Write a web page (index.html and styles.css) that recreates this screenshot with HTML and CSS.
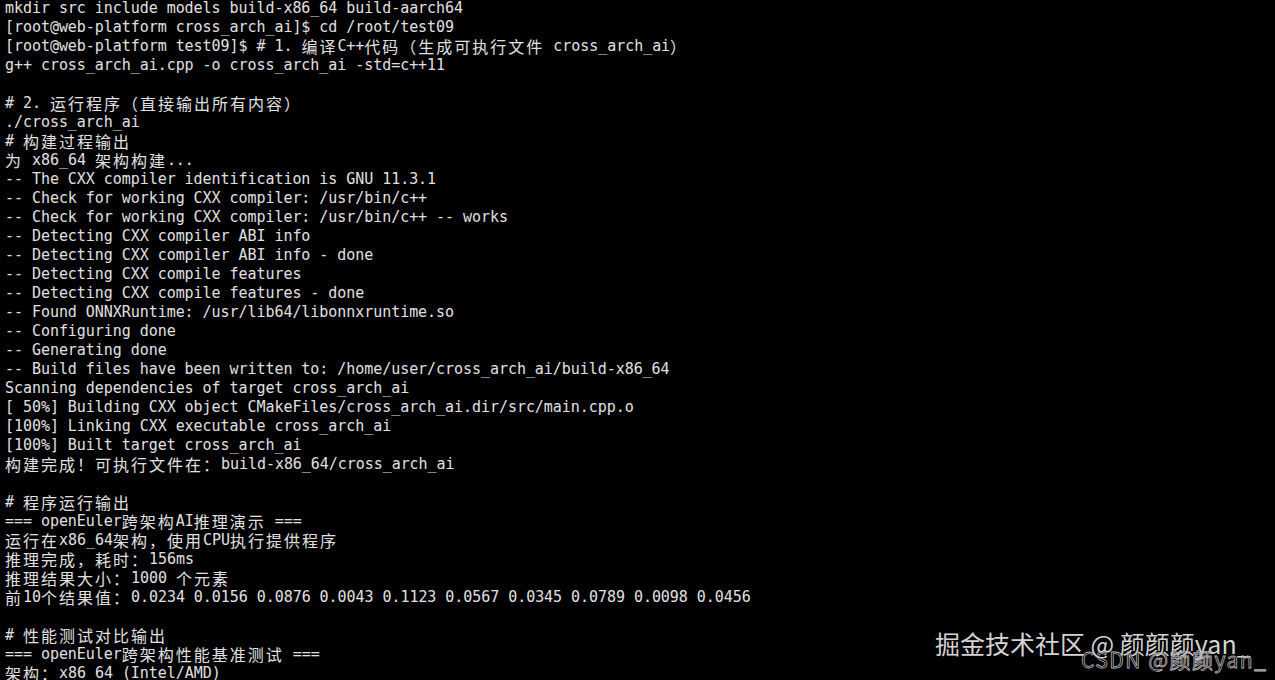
FILE: index.html
```html
<!DOCTYPE html>
<html lang="zh">
<head>
<meta charset="utf-8">
<title>terminal</title>
<link rel="stylesheet" href="styles.css">
</head>
<body>
<div class="screen">
<div class="term">
<div class="ln">mkdir src include models build-x86_64 build-aarch64</div>
<div class="ln">[root@web-platform cross_arch_ai]$ cd /root/test09</div>
<div class="ln">[root@web-platform test09]$ # 1. <span class="c">编译</span>C++<span class="c">代码（生成可执行文件</span> cross_arch_ai<span class="c">）</span></div>
<div class="ln">g++ cross_arch_ai.cpp -o cross_arch_ai -std=c++11</div>
<div class="ln"> </div>
<div class="ln"># 2. <span class="c">运行程序（直接输出所有内容）</span></div>
<div class="ln">./cross_arch_ai</div>
<div class="ln"># <span class="c">构建过程输出</span></div>
<div class="ln"><span class="c">为</span> x86_64 <span class="c">架构构建</span>...</div>
<div class="ln">-- The CXX compiler identification is GNU 11.3.1</div>
<div class="ln">-- Check for working CXX compiler: /usr/bin/c++</div>
<div class="ln">-- Check for working CXX compiler: /usr/bin/c++ -- works</div>
<div class="ln">-- Detecting CXX compiler ABI info</div>
<div class="ln">-- Detecting CXX compiler ABI info - done</div>
<div class="ln">-- Detecting CXX compile features</div>
<div class="ln">-- Detecting CXX compile features - done</div>
<div class="ln">-- Found ONNXRuntime: /usr/lib64/libonnxruntime.so</div>
<div class="ln">-- Configuring done</div>
<div class="ln">-- Generating done</div>
<div class="ln">-- Build files have been written to: /home/user/cross_arch_ai/build-x86_64</div>
<div class="ln">Scanning dependencies of target cross_arch_ai</div>
<div class="ln">[ 50%] Building CXX object CMakeFiles/cross_arch_ai.dir/src/main.cpp.o</div>
<div class="ln">[100%] Linking CXX executable cross_arch_ai</div>
<div class="ln">[100%] Built target cross_arch_ai</div>
<div class="ln"><span class="c">构建完成！可执行文件在：</span>build-x86_64/cross_arch_ai</div>
<div class="ln"> </div>
<div class="ln"># <span class="c">程序运行输出</span></div>
<div class="ln">=== openEuler<span class="c">跨架构</span>AI<span class="c">推理演示</span> ===</div>
<div class="ln"><span class="c">运行在</span>x86_64<span class="c">架构，使用</span>CPU<span class="c">执行提供程序</span></div>
<div class="ln"><span class="c">推理完成，耗时：</span>156ms</div>
<div class="ln"><span class="c">推理结果大小：</span>1000 <span class="c">个元素</span></div>
<div class="ln"><span class="c">前</span>10<span class="c">个结果值：</span>0.0234 0.0156 0.0876 0.0043 0.1123 0.0567 0.0345 0.0789 0.0098 0.0456</div>
<div class="ln"> </div>
<div class="ln"># <span class="c">性能测试对比输出</span></div>
<div class="ln">=== openEuler<span class="c">跨架构性能基准测试</span> ===</div>
<div class="ln"><span class="c">架构：</span>x86_64 (Intel/AMD)</div>
</div>
<div class="wm wm-juejin">掘金技术社区 @ 颜颜颜yan_</div>
<div class="wm wm-csdn">CSDN @颜颜yan_</div>
</div>
</body>
</html>
```

FILE: styles.css
```css
html, body {
  margin: 0;
  padding: 0;
  background: #000;
}

.screen {
  position: relative;
  width: 1275px;
  height: 680px;
  overflow: hidden;
  background: #000;
}

.term {
  padding: 0 0 0 5px;
  margin-top: -1px;
  font-family: "DejaVu Sans Mono", "Noto Sans CJK SC", monospace;
  font-size: 15px;
  letter-spacing: -0.05px;
  color: #e0e0e0;
}

.ln {
  height: 19px;
  line-height: 19px;
  white-space: pre;
}

.c {
  font-family: "Noto Sans CJK SC", sans-serif;
  font-size: 16px;
  letter-spacing: 2px;
  line-height: 19px;
  vertical-align: top;
}

.wm {
  position: absolute;
  white-space: nowrap;
  font-family: "Noto Sans CJK SC", "Noto Sans", sans-serif;
}

.wm-juejin {
  left: 935px;
  top: 626px;
  font-size: 25px;
  line-height: 34px;
  color: #d4d4d4;
}

.wm-csdn {
  left: 1081px;
  top: 645px;
  font-size: 21px;
  line-height: 28px;
  letter-spacing: 1.5px;
  color: rgba(0, 0, 0, 0);
  -webkit-text-stroke: 0.8px #b4b4b4;
}
```
